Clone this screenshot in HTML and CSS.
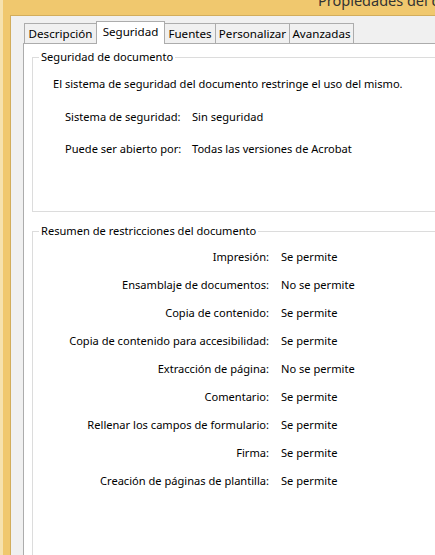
FILE: index.html
```html
<!DOCTYPE html>
<html lang="es">
<head>
  <meta charset="UTF-8">
  <meta name="viewport" content="width=device-width, initial-scale=1.0">
  <title>Propiedades del documento</title>
  <link rel="stylesheet" href="styles.css">
</head>
<body>
<div class="frame">
  <div class="titlebar"><span class="caption">Propiedades del documento</span></div>
  <div class="dialog">
    <div class="tabs">
      <div class="tab tab-desc">Descripción</div>
      <div class="tab tab-sec active">Seguridad</div>
      <div class="tab tab-fonts">Fuentes</div>
      <div class="tab tab-custom">Personalizar</div>
      <div class="tab tab-adv">Avanzadas</div>
    </div>
    <div class="pane">
      <fieldset class="group group-doc">
        <legend>Seguridad de documento</legend>
        <p class="intro">El sistema de seguridad del documento restringe el uso del mismo.</p>
        <div class="info">
          <span class="info-label">Sistema de seguridad:</span>
          <span>Sin seguridad</span>
          <span class="info-label">Puede ser abierto por:</span>
          <span>Todas las versiones de Acrobat</span>
        </div>
      </fieldset>

      <fieldset class="group group-rules">
        <legend>Resumen de restricciones del documento</legend>
        <div class="rules">
          <span class="rule-name">Impresión:</span><span>Se permite</span>
          <span class="rule-name">Ensamblaje de documentos:</span><span>No se permite</span>
          <span class="rule-name">Copia de contenido:</span><span>Se permite</span>
          <span class="rule-name">Copia de contenido para accesibilidad:</span><span>Se permite</span>
          <span class="rule-name">Extracción de página:</span><span>No se permite</span>
          <span class="rule-name">Comentario:</span><span>Se permite</span>
          <span class="rule-name">Rellenar los campos de formulario:</span><span>Se permite</span>
          <span class="rule-name">Firma:</span><span>Se permite</span>
          <span class="rule-name">Creación de páginas de plantilla:</span><span>Se permite</span>
        </div>
      </fieldset>
    </div>
  </div>
</div>
</body>
</html>
```

FILE: styles.css
```css
html, body {
  margin: 0;
  height: 100%;
  overflow: hidden;
}
body {
  font-family: "Noto Sans", "Open Sans", sans-serif;
  font-size: 11.1px;
  color: #000;
  background-color: #f0c86e;
}

/* borde amarillo de la ventana */
.frame {
  height: 100%;
  border-left: 3px solid #f6e2ae;
  display: flex;
  flex-direction: column;
}
.titlebar {
  flex-shrink: 0;
  height: 15px;
  overflow: hidden;
  padding-left: 315px;
  white-space: nowrap;
}
.caption {
  display: block;
  font-size: 14.5px;
  line-height: 15px;
  margin-top: -7px;
  color: #333;
}

.dialog {
  flex: 1;
  min-height: 0;
  margin-left: 7px;
  border-left: 1px solid #d2ad5c;
  border-top: 1px solid #d2ad5c;
  background-color: #f0f0f0;
  padding: 5px 0 0 12px;
  display: flex;
  flex-direction: column;
}

/* pestañas */
.tabs {
  flex-shrink: 0;
  display: flex;
  height: 22px;
  align-items: flex-end;
  padding-left: 1px;
}
.tab {
  height: 19px;
  line-height: 19px;
  background-color: #f0f0f0;
  border: 1px solid #acacac;
  border-bottom: none;
  margin-right: -1px;
  text-align: center;
  box-sizing: content-box;
  font-size: 11.6px;
}
.tab-desc { width: 71px; }
.tab-fonts { width: 50px; }
.tab-custom { width: 73px; }
.tab-adv { width: 63px; }
.tab.active {
  width: 67px;
  height: 22px;
  line-height: 20px;
  background-color: #fff;
  margin-bottom: -1px;
  position: relative;
  z-index: 1;
}

.pane {
  flex: 1;
  min-height: 0;
  background-color: #fff;
  border-left: 1px solid #acacac;
  border-top: 1px solid #acacac;
  padding: 5px 0 0 8px;
}

/* grupos */
.group {
  margin: 0;
  padding: 0;
  border: 1px solid #dcdcdc;
  border-right: none;
  min-width: 0;
}
.group legend {
  margin-left: 6px;
  padding: 0 2px;
  line-height: 16px;
}
.group-doc {
  height: 161px;
}
.group-rules {
  margin-top: 11px;
  border-bottom: none;
  height: 400px;
}

.intro {
  margin: 11px 0 0 20px;
  line-height: 16px;
}
.info {
  display: grid;
  grid-template-columns: 127px auto;
  row-gap: 16px;
  margin: 17px 0 0 32px;
  line-height: 16px;
}

.rules {
  display: grid;
  grid-template-columns: 236px auto;
  column-gap: 12px;
  row-gap: 12px;
  margin-top: 10px;
  line-height: 16px;
}
.rule-name {
  text-align: right;
}
```
